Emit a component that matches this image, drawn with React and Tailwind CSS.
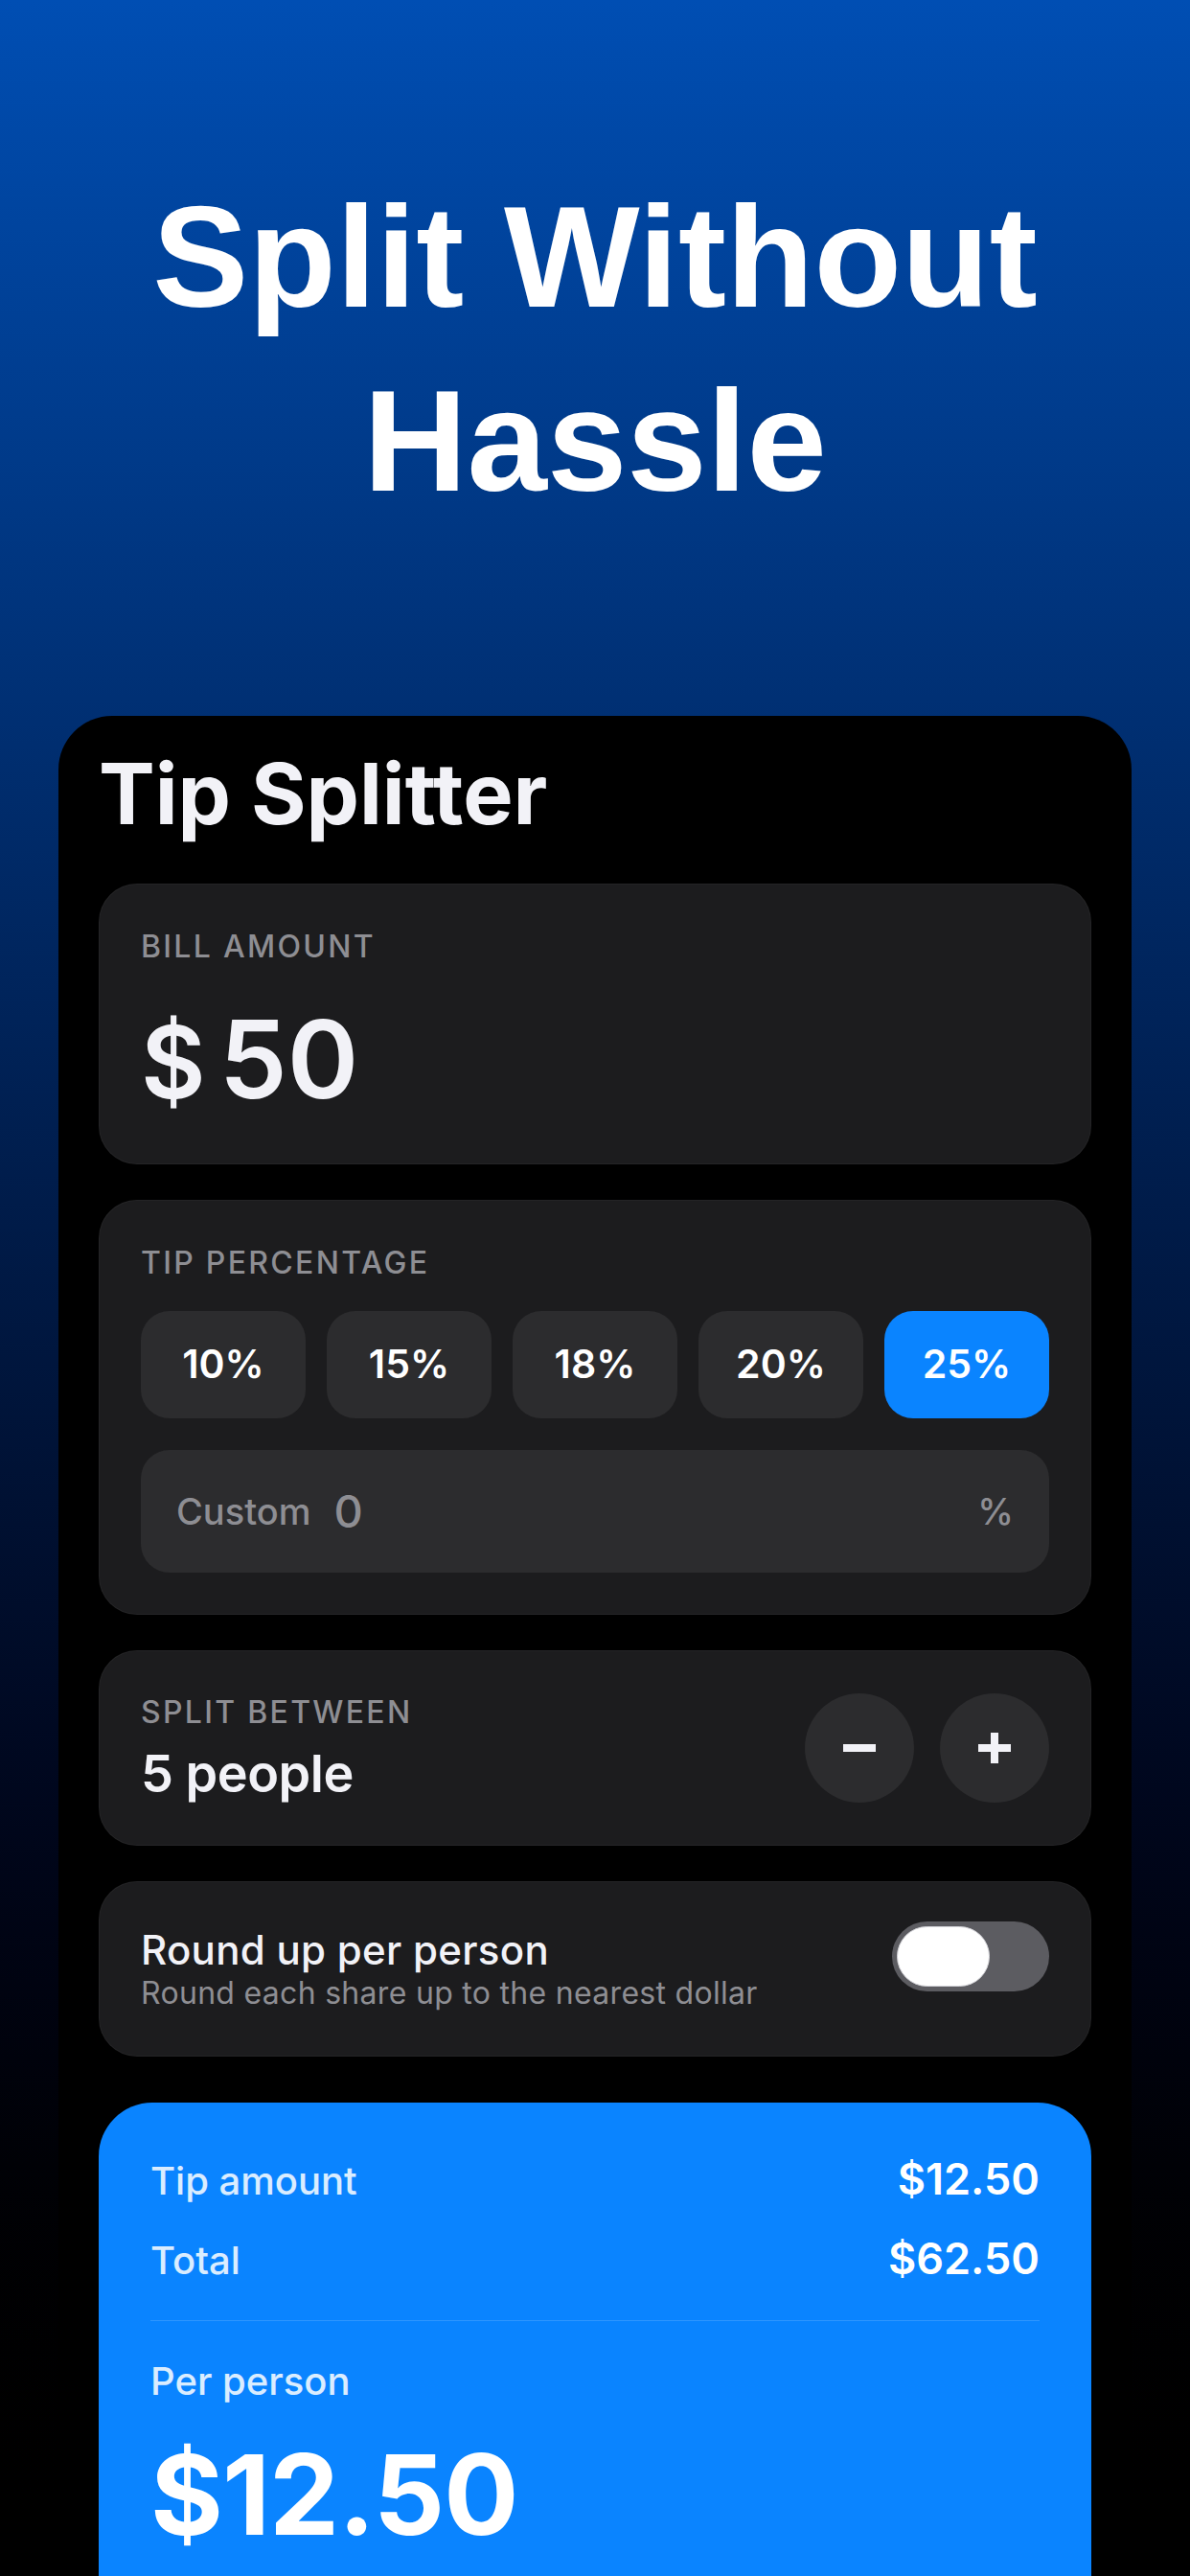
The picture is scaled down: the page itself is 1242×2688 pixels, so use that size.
const ui = { fontFamily: 'Inter, "Liberation Sans", sans-serif' };

function Label({ children }) {
  return (
    <div className="text-[32px] leading-[40px] font-medium tracking-[2.3px] text-[#8e8e93]">
      {children}
    </div>
  );
}

function Section({ className = '', children }) {
  return (
    <div className={`bg-[#1c1c1e] border border-white/[0.04] rounded-[40px] px-[43px] ${className}`}>
      {children}
    </div>
  );
}

function Stepper({ kind }) {
  return (
    <button className="w-[114px] h-[114px] rounded-full bg-[#2c2c2e] flex items-center justify-center">
      <svg width="34" height="34" viewBox="0 0 34 34">
        <line x1="0" y1="17" x2="34" y2="17" stroke="#f2f2f7" strokeWidth="8" />
        {kind === 'plus' && (
          <line x1="17" y1="1" x2="17" y2="33" stroke="#f2f2f7" strokeWidth="8" />
        )}
      </svg>
    </button>
  );
}

export default function App() {
  const tips = ['10%', '15%', '18%', '20%', '25%'];
  const selected = '25%';

  return (
    <div
      className="w-[1242px] h-[2688px] overflow-hidden bg-gradient-to-b from-[#004eb3] to-black"
      style={ui}
    >
      <h1
        className="pt-[172px] text-center text-white text-[150px] leading-[192px] font-bold"
        style={{ fontFamily: '"Liberation Sans", Arial, sans-serif' }}
      >
        Split Without
        <br />
        Hassle
      </h1>

      <div className="mx-[61px] mt-[191px] bg-black rounded-t-[56px] px-[42px] pt-[37px] pb-[200px]">
        <h2 className="text-[88px] leading-[88px] font-bold text-[#f2f2f7]">
          Tip Splitter
        </h2>

        <div className="mt-[50px] flex flex-col gap-[37px]">
          <Section className="pt-[45px] pb-[52px]">
            <Label>BILL AMOUNT</Label>
            <div className="mt-[41px] h-[113px] flex items-baseline text-[113px] leading-[113px] font-semibold text-[#f2f2f7]">
              <span className="text-[104px] leading-[104px]">$</span>
              <span className="ml-[14px]">50</span>
            </div>
          </Section>

          <Section className="pt-[45px] pb-[43px]">
            <Label>TIP PERCENTAGE</Label>
            <div className="mt-[30px] grid grid-cols-5 gap-[22px]">
              {tips.map((t) => (
                <button
                  key={t}
                  className={`h-[112px] rounded-[30px] text-[41px] font-semibold text-white ${
                    t === selected ? 'bg-[#0a84ff]' : 'bg-[#2c2c2e]'
                  }`}
                >
                  {t}
                </button>
              ))}
            </div>
            <div className="mt-[33px] h-[128px] rounded-[30px] bg-[#2c2c2e] px-[37px] flex items-center">
              <span className="text-[38px] font-medium text-[#8e8e93]">Custom</span>
              <span className="ml-[24px] text-[47px] font-medium text-[#8e8e93]">0</span>
              <span className="ml-auto text-[38px] font-medium text-[#8e8e93]">%</span>
            </div>
          </Section>

          <Section className="h-[204px] flex items-center justify-between">
            <div>
              <Label>SPLIT BETWEEN</Label>
              <div className="mt-[14px] text-[54px] leading-[60px] font-semibold tracking-[-0.5px] text-[#f2f2f7]">
                5 people
              </div>
            </div>
            <div className="flex gap-[27px]">
              <Stepper kind="minus" />
              <Stepper kind="plus" />
            </div>
          </Section>

          <Section className="h-[183px] flex items-center justify-between">
            <div>
              <div className="text-[42px] leading-[50px] font-medium tracking-[0.3px] text-[#f2f2f7]">
                Round up per person
              </div>
              <div className="text-[32px] leading-[40px] tracking-[0.3px] text-[#8e8e93]">
                Round each share up to the nearest dollar
              </div>
            </div>
            <div className="mb-[26px] w-[164px] h-[73px] rounded-full bg-[#5c5c61] p-[5px] flex">
              <div className="w-[97px] h-[63px] rounded-full bg-white border border-[#d1d1d6]" />
            </div>
          </Section>

          <div className="mt-[11px] bg-[#0a84ff] rounded-[56px] px-[54px] pt-[56px] pb-[200px]">
            <div className="flex flex-col gap-[35px]">
              <div className="flex items-baseline justify-between h-[48px] leading-[48px]">
                <span className="text-[40px] font-medium text-white/85">Tip amount</span>
                <span className="text-[45px] font-semibold text-white">$12.50</span>
              </div>
              <div className="flex items-baseline justify-between h-[48px] leading-[48px]">
                <span className="text-[40px] font-medium text-white/85">Total</span>
                <span className="text-[45px] font-semibold text-white">$62.50</span>
              </div>
            </div>
            <div className="mt-[40px] h-px bg-white/15" />
            <div className="mt-[39px] text-[40px] leading-[48px] font-medium text-white/85">
              Per person
            </div>
            <div className="mt-[36px] text-[116px] leading-[116px] font-bold tracking-[-1px] text-white">
              $12.50
            </div>
          </div>
        </div>
      </div>
    </div>
  );
}
